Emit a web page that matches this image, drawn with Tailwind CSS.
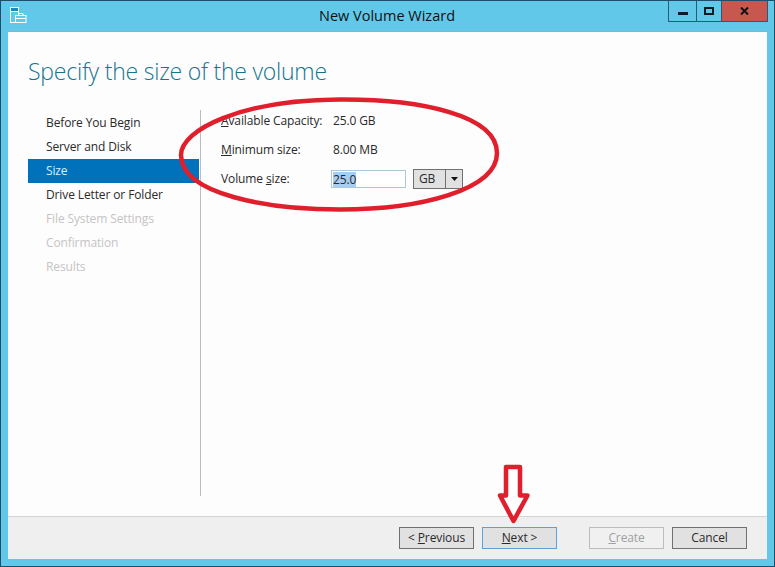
<!DOCTYPE html>
<html lang="en">
<head>
    <meta charset="UTF-8">
    <title>New Volume Wizard</title>
    <script src="https://cdn.jsdelivr.net/npm/@tailwindcss/browser@4"></script>
</head>
<body class="bg-[#62c8ea]">
    <div class="relative w-[775px] h-[567px] overflow-hidden font-['Open_Sans','Liberation_Sans',sans-serif] text-[12px] tracking-[-0.12px] text-[#2a2a2a]">
        <div class="h-full flex flex-col border border-[#1d4f6b] bg-[#62c8ea] px-[7px] pb-[7px]">

            <!-- title bar -->
            <div class="h-[30px] shrink-0 flex items-start relative">
                <svg class="mt-[6px] ml-[2px]" width="17" height="17" viewBox="0 0 17 17" fill="none" stroke="#fff" stroke-width="1">
                    <rect x="0.5" y="0.5" width="8" height="15" />
                    <rect x="1" y="1" width="7" height="3" fill="#1f86c4" stroke="none" />
                    <path d="M0.5 4.500h8" />
                    <rect x="5.500" y="8.500" width="10.500" height="7" fill="#62c8ea" />
                    <path d="M8.500 8.500v-2h4.500v2M5.500 11.500h10.500" />
                </svg>
                <div class="absolute left-0 right-0 top-[6px] text-center text-[14.5px] tracking-normal leading-[18px] text-[#111] pr-[1px]">New Volume Wizard</div>
                <div class="ml-auto mr-[-1px] flex h-[21px] border border-t-0 border-[#2a5a74] mt-0">
                    <div class="w-[28px] flex items-center justify-center border-r border-[#2a5a74]"><div class="w-[10px] h-[3px] bg-[#0c1c26] mt-[4px]"></div></div>
                    <div class="w-[25px] flex items-center justify-center border-r border-[#2a5a74]"><div class="w-[10px] h-[8px] border-2 border-[#0c1c26]"></div></div>
                    <div class="flex-1 w-[45px] flex items-center justify-center bg-[#c75850]">
                        <svg width="9" height="8" viewBox="0 0 9 8" stroke="#111" stroke-width="2"><path d="M1 0.500l7 7M8 0.500l-7 7" /></svg>
                    </div>
                </div>
            </div>

            <!-- wizard body -->
            <div class="flex-1 flex flex-col bg-[#fdfdfd] border-t border-[#7fb6cd]">
                <h1 class="pl-[20px] pt-[22px] text-[23px] tracking-[-0.22px] leading-[34px] font-light text-[#14748e]">Specify the size of the volume</h1>
                <div class="flex-1 flex pl-[20px] pt-[22px]">
                    <ul class="w-[171px] pt-[1px]">
                        <li class="h-[24px] pl-[18px] leading-[24px]">Before You Begin</li>
                        <li class="h-[24px] pl-[18px] leading-[24px]">Server and Disk</li>
                        <li class="h-[24px] pl-[18px] leading-[24px] bg-[#0072bc] text-[#d6f0ff]">Size</li>
                        <li class="h-[24px] pl-[18px] leading-[24px]">Drive Letter or Folder</li>
                        <li class="h-[24px] pl-[18px] leading-[24px] text-[#c4c4c4]">File System Settings</li>
                        <li class="h-[24px] pl-[18px] leading-[24px] text-[#c4c4c4]">Confirmation</li>
                        <li class="h-[24px] pl-[18px] leading-[24px] text-[#c4c4c4]">Results</li>
                    </ul>
                    <div class="w-px h-[386px] ml-[1px] bg-[#bcbcbc]"></div>
                    <div class="pl-[20px] pt-[2px]">
                        <div class="flex h-[18px] items-center">
                            <span class="w-[112px]"><u>A</u>vailable Capacity:</span><span>25.0 GB</span>
                        </div>
                        <div class="flex h-[18px] items-center mt-[11px]">
                            <span class="w-[112px]"><u>M</u>inimum size:</span><span>8.00 MB</span>
                        </div>
                        <div class="flex h-[20px] items-center mt-[10px]">
                            <span class="w-[110px]">Volume <u>s</u>ize:</span>
                            <div class="w-[75px] h-[18px] border border-[#abc9dc] flex items-center pl-[1px] bg-white">
                                <span class="bg-[#a8cdf2] leading-[15px]">25.0</span>
                            </div>
                            <div class="ml-[7px] w-[50px] h-[20px] flex border border-[#707070] bg-[#e1e1e1]">
                                <span class="flex-1 pl-[5px] leading-[18px] border-r border-[#707070]">GB</span>
                                <span class="w-[16px] flex items-center justify-center">
                                    <svg width="7" height="4" viewBox="0 0 7 4"><path d="M0 0h7L3.500 4z" fill="#111" /></svg>
                                </span>
                            </div>
                        </div>
                    </div>
                </div>

                <!-- footer buttons -->
                <div class="h-[43px] shrink-0 flex items-center bg-[#efefef] border-t border-[#d4d4d4] pl-[391px]">
                    <button class="w-[75px] h-[22px] border border-[#707070] bg-[#e1e1e1] leading-[20px]">&lt; <u>P</u>revious</button>
                    <button class="ml-[8px] w-[75px] h-[22px] border border-[#5b9fdc] bg-[#e1e1e1] leading-[20px]"><u>N</u>ext &gt;</button>
                    <button class="ml-[32px] w-[75px] h-[22px] border border-[#bcbcbc] bg-[#f0f0f0] text-[#a0a0a0] leading-[20px]"><u>C</u>reate</button>
                    <button class="ml-[8px] w-[75px] h-[22px] border border-[#707070] bg-[#e1e1e1] leading-[20px]">Cancel</button>
                </div>
            </div>
        </div>

        <!-- hand drawn annotations on top -->
        <svg class="absolute left-0 top-0 pointer-events-none" width="775" height="567" viewBox="0 0 775 567" fill="none">
            <path d="M181 155C181 130 240 100 340 99.500C420 99 497 115 497 153C497 190 420 209.500 340 209.500C270 209.500 181 195 181 155Z" stroke="#e01f2d" stroke-width="4.500" />
            <path d="M506 467H520V495.500H527.500L513.500 521L500 495.500H506Z" stroke="#e01f2d" stroke-width="4.500" stroke-linejoin="round" fill="#fff" />
        </svg>
    </div>
</body>
</html>
